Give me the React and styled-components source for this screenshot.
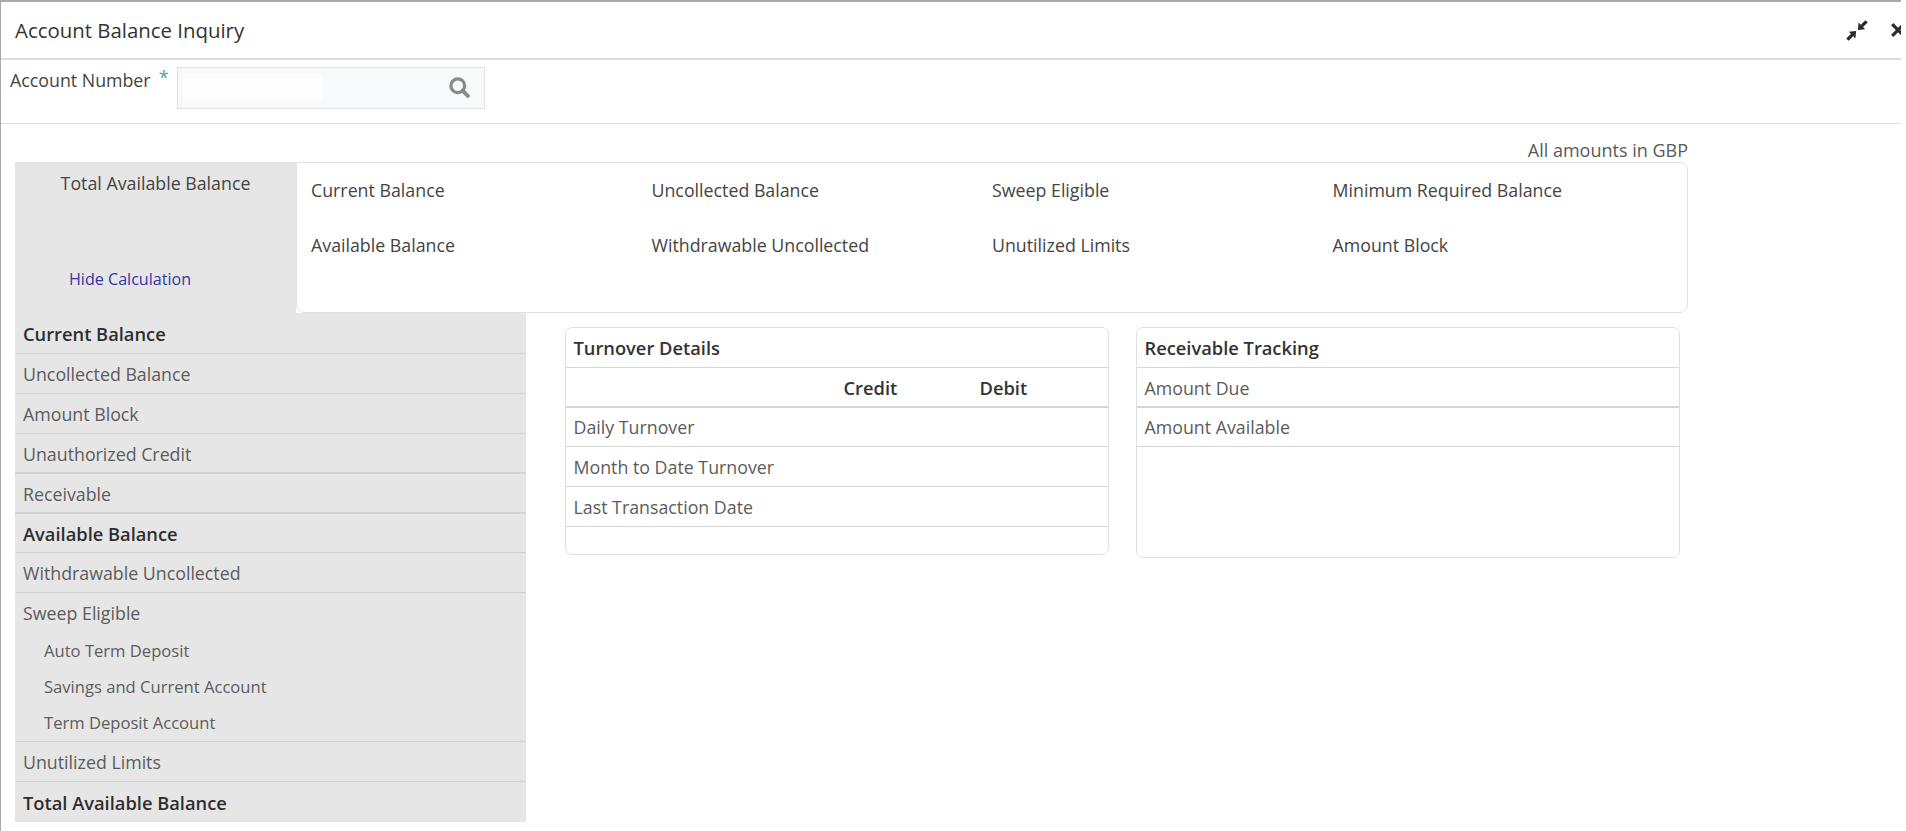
import React from "react";
import styled, { createGlobalStyle } from "styled-components";

const Global = createGlobalStyle`
  html, body { margin: 0; padding: 0; background: #fff; }
  body { font-family: "Open Sans", "Noto Sans", sans-serif; color: #555; overflow: hidden; }
  * { box-sizing: border-box; }
`;

const Window = styled.div`
  width: 1901px;
  height: 831px;
  overflow: hidden;
  background: #fff;
  border-left: 1px solid #a9a9a9;
  border-top: 2px solid #a9a9a9;
  position: relative;
`;
const TopAccent = styled.div`
  position: absolute;
  left: -1px;
  top: -2px;
  width: 270px;
  height: 2px;
  background: #555;
`;
const TitleBar = styled.header`
  height: 58px;
  border-bottom: 2px solid #ddd;
  display: flex;
  align-items: center;
  padding: 0 0 0 14px;
`;
const Title = styled.h1`
  flex: 1;
  margin: 0;
  font-size: 20.4px;
  font-weight: 400;
  color: #333;
`;
const WindowIcons = styled.div`
  display: flex;
  align-items: center;
  flex: none;
  width: 55px;
  gap: 23px;
  color: #2b2b2b;
  svg { flex: none; }
`;
const SearchRow = styled.div`
  height: 64px;
  border-bottom: 1px solid #e0e0e0;
  display: flex;
  align-items: flex-start;
  padding: 7px 0 0 9px;
`;
const FieldLabel = styled.label`
  font-size: 17.8px;
  line-height: 26px;
  color: #444;
  width: 167px;
`;
const Star = styled.span`
  color: #4a9fb5;
  margin-left: 8px;
  font-size: 18px;
  position: relative;
  top: -3px;
`;
const LookupBox = styled.div`
  width: 308px;
  height: 42px;
  background: #f8f9fb;
  border: 1px solid #e3e3e3;
  display: flex;
  align-items: center;
  justify-content: space-between;
  padding: 0 14px 2px 5px;
`;
const LookupInner = styled.div`
  width: 140px;
  height: 26px;
  background: #fdfdfe;
`;
const LookupIcon = styled.span`
  color: #8a8a8a;
  display: flex;
`;
const Content = styled.main`
  padding-left: 14px;
`;
const AmountsNote = styled.div`
  width: 1673px;
  height: 38px;
  text-align: right;
  font-size: 18px;
  line-height: 24px;
  padding-top: 14px;
  color: #5a5a5a;
`;
const Summary = styled.section`
  display: flex;
  width: 1673px;
  height: 151px;
`;
const TotalBlock = styled.div`
  width: 281px;
  background: #e6e6e6;
  display: flex;
  flex-direction: column;
  justify-content: space-between;
  padding: 9px 0 22px;
`;
const TotalLabel = styled.div`
  text-align: center;
  font-size: 17.8px;
  line-height: 24px;
  color: #444;
`;
const HideLink = styled.a`
  margin-left: 54px;
  font-size: 16.1px;
  line-height: 24px;
  color: #3535a8;
`;
const SummaryPanel = styled.div`
  flex: 1;
  border: 1px solid #e2e2e2;
  border-radius: 0 8px 8px 8px;
  display: grid;
  grid-template-columns: repeat(4, 340.5px);
  grid-auto-rows: 55px;
  padding: 1px 0 0 14px;
`;
const SummaryItem = styled.div`
  font-size: 17.8px;
  line-height: 52px;
  color: #444;
`;
const Lower = styled.div`
  display: flex;
  align-items: flex-start;
`;
const Calc = styled.div`
  width: 511px;
  height: 509px;
  background: #e6e6e6;
`;
const CalcRow = styled.div`
  height: ${(p) => p.$h || 40}px;
  display: flex;
  align-items: center;
  padding: 1px 0 0 8px;
  font-size: ${(p) => (p.$bold ? 18.3 : 17.8)}px;
  font-weight: ${(p) => (p.$bold ? 600 : 400)};
  color: ${(p) => (p.$bold ? "#2e2e2e" : "#5c5c5c")};
  border-bottom: ${(p) => (p.$line === undefined ? 1 : p.$line)}px solid #d2d2d2;
`;
const SubGroup = styled.div`
  border-bottom: 1px solid #d2d2d2;
  height: 149px;
  display: flex;
  flex-direction: column;
`;
const SweepHead = styled.div`
  height: 40px;
  display: flex;
  align-items: center;
  padding: 1px 0 0 8px;
  font-size: 17.8px;
  color: #5c5c5c;
`;
const SubRow = styled.div`
  height: 36.3px;
  display: flex;
  align-items: center;
  padding-left: 29px;
  font-size: 16.6px;
  color: #5c5c5c;
`;
const Cards = styled.div`
  display: flex;
  padding: 14px 0 0 39px;
  gap: 27px;
`;
const Card = styled.section`
  width: ${(p) => p.$w}px;
  height: ${(p) => p.$h}px;
  border: 1px solid #e0e0e0;
  border-radius: 7px;
  overflow: hidden;
`;
const CardRow = styled.div`
  height: ${(p) => (p.$h ? p.$h : 40)}px;
  display: grid;
  grid-template-columns: 270px 136px 1fr;
  align-items: center;
  padding: ${(p) => (p.$line ? 1 : 0)}px 0 0 7.5px;
  font-size: ${(p) => (p.$bold ? 18.3 : 17.8)}px;
  font-weight: ${(p) => (p.$bold ? 600 : 400)};
  color: ${(p) => (p.$bold ? "#333" : "#5c5c5c")};
  white-space: nowrap;
  border-bottom: ${(p) => (p.$line || 1)}px solid #d6d6d6;
`;

const CompressIcon = () => (
  <svg width="22" height="21" viewBox="0 0 22 21" fill="currentColor">
    <path d="M21.8 2.6 19.4.2 14.8 4.8 12.6 2.6 11.9 9.9 19.2 9.2 17 7Z" />
    <path d="M.2 18.4 2.6 20.8 7.2 16.2 9.4 18.4 10.1 11.1 2.8 11.8 5 14Z" />
  </svg>
);
const CloseIcon = () => (
  <svg width="14" height="14" viewBox="0 0 14 14" fill="none" stroke="currentColor" strokeWidth="3.2">
    <path d="M1.2 1.2 12.8 12.8M12.8 1.2 1.2 12.8" />
  </svg>
);
const SearchIcon = () => (
  <svg width="21" height="21" viewBox="0 0 21 21" fill="none" stroke="currentColor">
    <circle cx="8.8" cy="8.8" r="6.9" strokeWidth="3.2" />
    <path d="M13.6 13.6 18.8 18.8" strokeWidth="4" strokeLinecap="round" />
  </svg>
);

const summary = [
  "Current Balance", "Uncollected Balance", "Sweep Eligible", "Minimum Required Balance",
  "Available Balance", "Withdrawable Uncollected", "Unutilized Limits", "Amount Block",
];

export default function App() {
  return (
    <Window>
      <Global />
      <TopAccent />
      <TitleBar>
        <Title>Account Balance Inquiry</Title>
        <WindowIcons>
          <CompressIcon />
          <CloseIcon />
        </WindowIcons>
      </TitleBar>
      <SearchRow>
        <FieldLabel>Account Number<Star>*</Star></FieldLabel>
        <LookupBox>
          <LookupInner />
          <LookupIcon><SearchIcon /></LookupIcon>
        </LookupBox>
      </SearchRow>
      <Content>
        <AmountsNote>All amounts in GBP</AmountsNote>
        <Summary>
          <TotalBlock>
            <TotalLabel>Total Available Balance</TotalLabel>
            <HideLink>Hide Calculation</HideLink>
          </TotalBlock>
          <SummaryPanel>
            {summary.map((s) => <SummaryItem key={s}>{s}</SummaryItem>)}
          </SummaryPanel>
        </Summary>
        <Lower>
          <Calc>
            <CalcRow $bold $h={41}>Current Balance</CalcRow>
            <CalcRow>Uncollected Balance</CalcRow>
            <CalcRow>Amount Block</CalcRow>
            <CalcRow $line={2}>Unauthorized Credit</CalcRow>
            <CalcRow $line={2}>Receivable</CalcRow>
            <CalcRow $bold $h={39}>Available Balance</CalcRow>
            <CalcRow>Withdrawable Uncollected</CalcRow>
            <SubGroup>
              <SweepHead>Sweep Eligible</SweepHead>
              <SubRow>Auto Term Deposit</SubRow>
              <SubRow>Savings and Current Account</SubRow>
              <SubRow>Term Deposit Account</SubRow>
            </SubGroup>
            <CalcRow>Unutilized Limits</CalcRow>
            <CalcRow $bold $line={0}>Total Available Balance</CalcRow>
          </Calc>
          <Cards>
            <Card $w={544} $h={228}>
              <CardRow $bold>Turnover Details</CardRow>
              <CardRow $bold $line={2}><span /><span>Credit</span><span>Debit</span></CardRow>
              <CardRow $h={39}>Daily Turnover</CardRow>
              <CardRow>Month to Date Turnover</CardRow>
              <CardRow>Last Transaction Date</CardRow>
            </Card>
            <Card $w={544} $h={231}>
              <CardRow $bold>Receivable Tracking</CardRow>
              <CardRow $line={2}>Amount Due</CardRow>
              <CardRow $h={39}>Amount Available</CardRow>
            </Card>
          </Cards>
        </Lower>
      </Content>
    </Window>
  );
}
